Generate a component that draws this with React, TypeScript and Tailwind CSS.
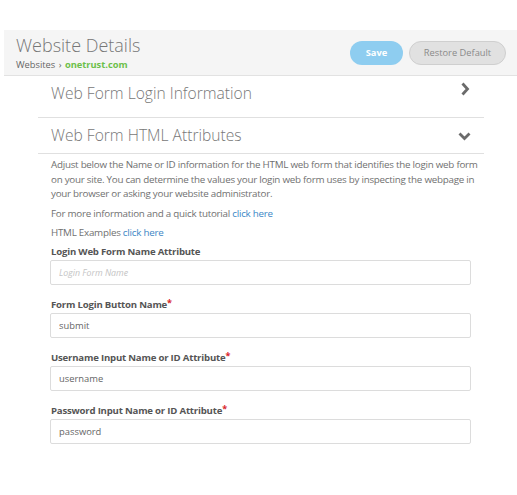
const Chevron = ({ down }: { down?: boolean }) =>
	down ? (
		<svg width="13" height="10" viewBox="0 0 13 10" className="mr-[13px]">
			<path d="M1.5 2.5 L6.5 7.5 L11.5 2.5" fill="none" stroke="#6b6b6b" strokeWidth="2.8" />
		</svg>
	) : (
		<svg width="10" height="14" viewBox="0 0 10 14" className="mr-[14px] mb-[10px]">
			<path d="M2.5 1.5 L7.5 7 L2.5 12.5" fill="none" stroke="#6b6b6b" strokeWidth="2.8" />
		</svg>
	);

const Field = ({
	label,
	value,
	placeholder,
	required,
}: {
	label: string;
	value?: string;
	placeholder?: string;
	required?: boolean;
}) => (
	<div className="flex flex-col">
		<label className="flex items-start h-[12px] text-[9.6px] tracking-[-0.2px] font-bold text-[#555] leading-[12px] mb-[2px]">
			{label}
			{required && <span className="text-[#d9262b] text-[9px] leading-[8px]">*</span>}
		</label>
		<input
			readOnly
			defaultValue={value}
			placeholder={placeholder}
			className="h-[25px] w-[421px] -ml-px border border-[#dcdcdc] rounded-[2px] px-2 text-[9.4px] text-[#666] bg-white outline-none placeholder:italic placeholder:text-[8.8px] placeholder:text-[#c4c4c4]"
		/>
	</div>
);

export default function App() {
	return (
		<div className="w-[517px] h-[495px] bg-white pt-[30px] pl-[4px] font-['Open_Sans',sans-serif]">
			<div className="flex items-center justify-between h-[46px] pl-3 pr-[11px] bg-[#f5f5f5] border-b border-[#e2e2e2]">
				<div className="flex flex-col">
					<h1 className="text-[18px] font-light text-[#777] leading-6">Website Details</h1>
					<div className="text-[9.3px] text-[#666] leading-4">
						Websites <span className="mx-[1px]">›</span>{' '}
						<span className="font-bold text-[#6cc04a]">onetrust.com</span>
					</div>
				</div>
				<div className="flex items-center gap-[6px]">
					<button className="h-[24px] w-[53px] rounded-full bg-[#8ecdf0] text-white text-[9.3px] font-bold">
						Save
					</button>
					<button className="h-[24px] w-[97px] rounded-full bg-[#e1e1e1] border border-[#cfcfcf] text-[#8a8a8a] text-[9.3px]">
						Restore Default
					</button>
				</div>
			</div>

			<div className="ml-[34px] w-[446px]">
				<div className="flex items-center justify-between h-[42px] pl-[13px] pb-[6px] border-b border-[#e0e0e0]">
					<span className="text-[15.6px] font-light text-[#777]">Web Form Login Information</span>
					<Chevron />
				</div>
				<div className="flex items-center justify-between h-[36px] pl-[13px] border-b border-[#e0e0e0]">
					<span className="text-[15.6px] font-light text-[#777]">Web Form HTML Attributes</span>
					<Chevron down />
				</div>

				<div className="pl-[13px] pt-[4px] text-[9.8px] tracking-[-0.25px] leading-[14.5px] text-[#707070]">
					<p className="w-[430px]">
						Adjust below the Name or ID information for the HTML web form that identifies the login web form
						on your site. You can determine the values your login web form uses by inspecting the webpage in
						your browser or asking your website administrator.
					</p>
					<p className="mt-[5px]">
						For more information and a quick tutorial <span className="text-[#3c87c6]">click here</span>
					</p>
					<p className="mt-[5px]">
						HTML Examples <span className="text-[#3c87c6]">click here</span>
					</p>

					<div className="flex flex-col gap-[14px] mt-[5px] tracking-normal">
						<Field label="Login Web Form Name Attribute" placeholder="Login Form Name" />
						<Field label="Form Login Button Name" value="submit" required />
						<Field label="Username Input Name or ID Attribute" value="username" required />
						<Field label="Password Input Name or ID Attribute" value="password" required />
					</div>
				</div>
			</div>
		</div>
	);
}
